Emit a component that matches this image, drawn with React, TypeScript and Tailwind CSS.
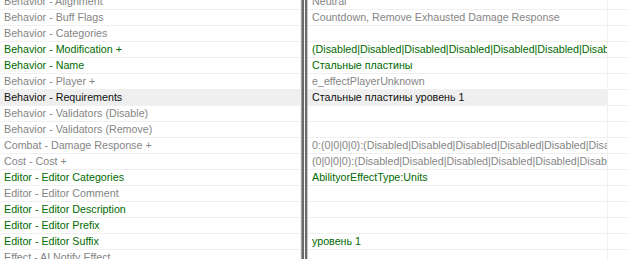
type Tone = 'gray' | 'green' | 'black';

interface Row {
  name: string;
  value: string;
  tone: Tone;
  selected?: boolean;
}

const rows: Row[] = [
  { name: 'Behavior - Alignment', value: 'Neutral', tone: 'gray' },
  { name: 'Behavior - Buff Flags', value: 'Countdown, Remove Exhausted Damage Response', tone: 'gray' },
  { name: 'Behavior - Categories', value: '', tone: 'gray' },
  { name: 'Behavior - Modification +', value: '(Disabled|Disabled|Disabled|Disabled|Disabled|Disabled|Disabled|Disabled|Disabled)', tone: 'green' },
  { name: 'Behavior - Name', value: 'Стальные пластины', tone: 'green' },
  { name: 'Behavior - Player +', value: 'e_effectPlayerUnknown', tone: 'gray' },
  { name: 'Behavior - Requirements', value: 'Стальные пластины уровень 1', tone: 'black', selected: true },
  { name: 'Behavior - Validators (Disable)', value: '', tone: 'gray' },
  { name: 'Behavior - Validators (Remove)', value: '', tone: 'gray' },
  { name: 'Combat - Damage Response +', value: '0:(0|0|0|0):(Disabled|Disabled|Disabled|Disabled|Disabled|Disabled|Disabled)', tone: 'gray' },
  { name: 'Cost - Cost +', value: '(0|0|0|0):(Disabled|Disabled|Disabled|Disabled|Disabled|Disabled|Disabled)', tone: 'gray' },
  { name: 'Editor - Editor Categories', value: 'AbilityorEffectType:Units', tone: 'green' },
  { name: 'Editor - Editor Comment', value: '', tone: 'gray' },
  { name: 'Editor - Editor Description', value: '', tone: 'green' },
  { name: 'Editor - Editor Prefix', value: '', tone: 'green' },
  { name: 'Editor - Editor Suffix', value: 'уровень 1', tone: 'green' },
  { name: 'Effect - AI Notify Effect', value: '', tone: 'gray' },
];

const toneClass: Record<Tone, string> = {
  gray: 'text-[#858585]',
  green: 'text-[#006a00]',
  black: 'text-[#101010]',
};

function Cell({ text, tone, selected, className }: { text: string; tone: Tone; selected?: boolean; className: string }) {
  return (
    <div
      className={`h-4 border-b border-[#f0f0f0] overflow-hidden whitespace-nowrap leading-[15px] ${selected ? 'bg-[#efefef]' : 'bg-white'} ${toneClass[tone]} ${className}`}
    >
      {text}
    </div>
  );
}

export default function App() {
  return (
    <div className="w-[628px] h-[259px] overflow-hidden bg-white font-['Liberation_Sans',Arial,sans-serif] text-[10.7px]">
      <div className="flex -mt-[6px]">
        <div className="w-[301px] border-r border-[#f0f0f0] shrink-0">
          {rows.map((r, i) => (
            <Cell key={i} text={r.name} tone={r.tone} selected={r.selected} className="pl-[4px]" />
          ))}
        </div>
        <div className="flex shrink-0 self-stretch">
          <div className="w-px bg-[#a0a0a0]" />
          <div className="w-[2px] bg-[#6a6a6a]" />
          <div className="w-px bg-[#f4f4f4]" />
          <div className="w-[2px] bg-[#6a6a6a]" />
          <div className="w-px bg-[#c8c8c8]" />
        </div>
        <div className="w-[300px] border-r border-[#f0f0f0] shrink-0">
          {rows.map((r, i) => (
            <Cell key={i} text={r.value} tone={r.tone} selected={r.selected} className="pl-[4px]" />
          ))}
        </div>
        <div className="flex-1">
          {rows.map((_, i) => (
            <div key={i} className="h-4 border-b border-[#f0f0f0]" />
          ))}
        </div>
      </div>
    </div>
  );
}
